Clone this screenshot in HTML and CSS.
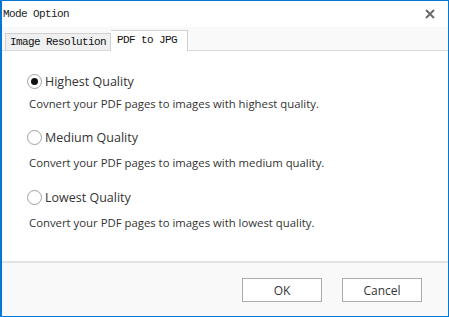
FILE: index.html
```html
<!DOCTYPE html>
<html lang="en">
<head>
    <meta charset="UTF-8">
    <meta name="viewport" content="width=device-width, initial-scale=1.0">
    <title>Mode Option</title>
    <link rel="stylesheet" href="styles.css">
</head>
<body>
    <div class="window">
        <div class="titlebar">
            <span class="title">Mode Option</span>
            <svg class="close" width="10" height="10" viewBox="0 0 10 10">
                <path d="M1 1 L9 9 M9 1 L1 9" stroke="#6b6b6b" stroke-width="2"/>
            </svg>
        </div>

        <div class="tabstrip">
            <div class="tab">Image Resolution</div>
            <div class="tab active">PDF to JPG</div>
        </div>

        <div class="content">
            <div class="option first">
                <label class="radio-row">
                    <input type="radio" name="quality" checked>
                    <span>Highest Quality</span>
                </label>
                <p class="desc">Covnert your PDF pages to images with highest quality.</p>
            </div>
            <div class="option">
                <label class="radio-row">
                    <input type="radio" name="quality">
                    <span>Medium Quality</span>
                </label>
                <p class="desc">Convert your PDF pages to images with medium quality.</p>
            </div>
            <div class="option">
                <label class="radio-row">
                    <input type="radio" name="quality">
                    <span>Lowest Quality</span>
                </label>
                <p class="desc">Convert your PDF pages to images with lowest quality.</p>
            </div>
        </div>

        <div class="footer">
            <button>OK</button>
            <button>Cancel</button>
        </div>
    </div>
</body>
</html>
```

FILE: styles.css
```css
body {
    margin: 0;
    font-family: "Open Sans", "Noto Sans", sans-serif;
    background-color: white;
}
.window {
    width: 449px;
    height: 317px;
    box-sizing: border-box;
    border: 1px solid #0078d7;
    border-left-width: 2px;
    display: flex;
    flex-direction: column;
    background-color: white;
}
.titlebar {
    height: 26px;
    display: flex;
    align-items: center;
    justify-content: space-between;
    padding: 0 13px 0 1px;
}
.title {
    font-family: "Liberation Mono", monospace;
    font-size: 11px;
    letter-spacing: -0.6px;
    color: #222;
}
.tabstrip {
    height: 23px;
    background-color: #f9f9f9;
    border-bottom: 1px solid #d9d9d9;
    display: flex;
    align-items: flex-end;
    padding-left: 3px;
}
.tab {
    font-family: "Liberation Mono", monospace;
    font-size: 11px;
    letter-spacing: -0.6px;
    color: #111;
    height: 16px;
    line-height: 16px;
    padding: 0 4px;
    background-color: #f0f0f0;
    border: 1px solid #d0d0d0;
    border-bottom: none;
}
.tab.active {
    height: 20px;
    line-height: 19px;
    padding: 0 10px 0 6px;
    background-color: white;
    margin-bottom: -1px;
    border-left: none;
}
.content {
    flex: 1;
    padding: 21px 0 0 23px;
}
.option {
    height: 60px;
}
.option.first {
    height: 56px;
}
.radio-row {
    display: flex;
    align-items: center;
    height: 18px;
    font-size: 12.5px;
    color: #333;
}
.radio-row input {
    appearance: none;
    width: 15px;
    height: 15px;
    margin: 0 3px 0 2px;
    border: 1px solid #a0a0a0;
    border-radius: 50%;
    background-color: white;
    box-sizing: border-box;
    display: flex;
    align-items: center;
    justify-content: center;
}
.radio-row input:checked::after {
    content: "";
    width: 7px;
    height: 7px;
    border-radius: 50%;
    background-color: #111;
}
.desc {
    margin: 9px 0 0 4px;
    font-size: 11.35px;
    color: #333;
}
.option.first .desc {
    margin-top: 6px;
}
.footer {
    height: 55px;
    background-color: #f9f9f9;
    border-top: 2px solid #e3e3e3;
    display: flex;
    justify-content: flex-end;
    align-items: flex-start;
    gap: 20px;
    padding: 15px 26px 0 0;
    box-sizing: border-box;
}
button {
    width: 80px;
    height: 24px;
    background-color: white;
    border: 1px solid #adadad;
    font-family: "Open Sans", "Noto Sans", sans-serif;
    font-size: 12px;
    color: #333;
    padding: 0;
}
```
